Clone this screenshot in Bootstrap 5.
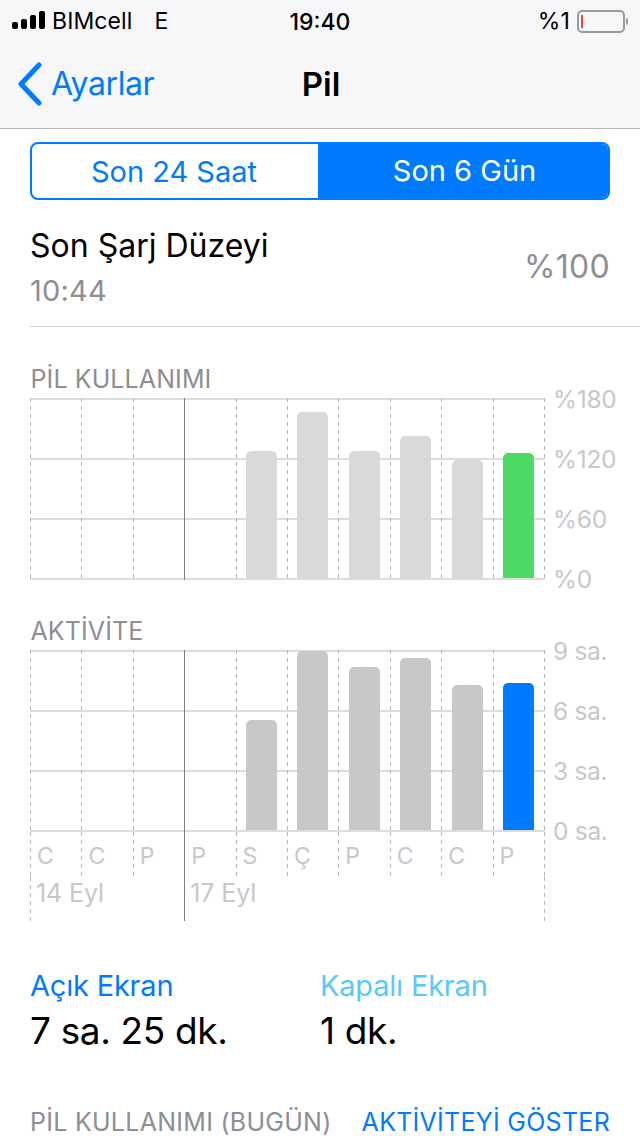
<!DOCTYPE html>
<html lang="tr">
<head>
  <meta charset="UTF-8">
  <title>Pil</title>
  <link href="https://cdn.jsdelivr.net/npm/bootstrap@5.3.0/dist/css/bootstrap.min.css" rel="stylesheet">
  <style>
    html, body { height: 1136px; overflow: hidden; }
    body { font-family: Inter, "Noto Sans", sans-serif; background: #fff; color: #000; }
    .top-bar { background: #f7f7f9; border-bottom: 1px solid #b4b4b6; height: 129px; }
    .status-row { height: 40px; padding: 2px 12px 0 12px; font-size: 23px; letter-spacing: .1px; }
    .signal { gap: 3px; margin-right: 7px; margin-bottom: 3px; }
    .signal i { display: block; width: 6px; background: #000; border-radius: 2px; }
    .status-net { margin-left: 22px; }
    .clock { left: 0; right: 0; top: 5px; font-size: 23px; font-weight: 500; }
    .battery { width: 48px; height: 23px; border: 2px solid #9a9a9c; border-radius: 5px; padding: 3px 2px; margin-left: 7px; margin-right: 5px; }
    .battery i { display: block; width: 2px; height: 100%; background: #ff3b30; }
    .battery-tip { width: 2px; height: 7px; background: #9a9a9c; border-radius: 0 2px 2px 0; margin-left: -4px; }
    .nav-row { height: 88px; padding-left: 17px; }
    .back-link { color: #007aff; font-size: 32px; letter-spacing: -.4px; gap: 8px; text-decoration: none; }
    .screen-title { left: 2px; right: 0; top: 61px; font-size: 33px; font-weight: 600; line-height: 46px; }
    .seg-wrap { padding: 13px 30px 0; }
    .seg { border: 2px solid #007aff; border-radius: 8px; height: 58px; overflow: hidden; font-size: 29px; padding-top: 1px; }
    .seg-off { color: #007aff; flex: 0 0 286px; padding-right: 2px; }
    .seg-on { background: #007aff; color: #fff; flex: 1 1 0; margin-top: -1px; padding-left: 3px; }
    .charge-row { margin-left: 30px; padding: 24px 30px 0 0; height: 127px; border-bottom: 1px solid #d2d2d4; }
    .charge-name { font-size: 32px; line-height: 44px; }
    .charge-time { font-size: 29px; line-height: 44px; color: #8e8e93; margin-top: 1px; letter-spacing: .2px; }
    .charge-val { font-size: 32px; color: #8e8e93; margin-top: 19px; letter-spacing: .3px; }
    .chart-head { margin: 33px 0 0 30.5px; height: 38px; font-size: 25px; line-height: 38px; color: #8e8e93; letter-spacing: .1px; }
    .chart-head.second { margin-top: 32px; }
    .chart-body { margin-left: 30px; }
    .plot { width: 515px; height: 182px; display: grid; grid-template-columns: repeat(10, 51.4px); position: relative;
      background:
        linear-gradient(#dcdcdc, #dcdcdc) 0 0 / 100% 2px no-repeat,
        linear-gradient(#dcdcdc, #dcdcdc) 0 60px / 100% 2px no-repeat,
        linear-gradient(#dcdcdc, #dcdcdc) 0 120px / 100% 2px no-repeat,
        linear-gradient(#dcdcdc, #dcdcdc) 0 180px / 100% 2px no-repeat; }
    .slot { display: flex; align-items: flex-end; padding-left: 10.5px; }
    .dash { background: repeating-linear-gradient(to bottom, #b9b9bb 0 4px, transparent 4px 8px) 0 0 / 1px 100% no-repeat; }
    .slot-solid { background: linear-gradient(#7d7d7f, #7d7d7f) 0 0 / 1px 100% no-repeat; }
    .bar { display: block; width: 31px; border-radius: 5px 5px 0 0; position: relative; }
    .edge { position: absolute; left: 514px; top: 0; bottom: 0; width: 1px; }
    .axis { width: 95px; height: 182px; padding-left: 8px; font-size: 24.5px; color: #c7c7cc; letter-spacing: -.3px; margin-top: -13px; line-height: 28px; }
    .axis span { display: block; height: 60px; }
    .days { width: 515px; display: grid; grid-template-columns: repeat(10, 51.4px); height: 45px; position: relative; }
    .days div { padding: 9px 0 0 7px; font-size: 23px; line-height: 30px; color: #c7c7cc; }
    .dates { width: 515px; display: grid; grid-template-columns: repeat(10, 51.4px); height: 44px; position: relative; }
    .dates div { font-size: 25px; line-height: 32px; padding: 0 0 0 6px; color: #c7c7cc; white-space: nowrap; letter-spacing: -.1px; }
    .usage-row { padding: 45px 30px 0; }
    .usage-col { width: 290px; }
    .usage-label { font-size: 29px; line-height: 40px; letter-spacing: -.2px; }
    .on-blue { color: #007aff; }
    .off-blue { color: #5ac8fa; }
    .usage-val { font-size: 37px; line-height: 50px; letter-spacing: -.35px; }
    .foot-row { padding: 47px 30px 0; font-size: 25px; line-height: 38px; letter-spacing: .27px; white-space: nowrap; }
    .foot-row a { color: #007aff; text-decoration: none; }
    .foot-row span { color: #8e8e93; }
  </style>
</head>
<body>

<div class="top-bar position-relative">
  <div class="status-row d-flex align-items-center">
    <div class="signal d-flex align-items-end">
      <i style="height: 7px"></i><i style="height: 10px"></i><i style="height: 14px"></i><i style="height: 18px"></i>
    </div>
    <span>BIMcell</span>
    <span class="status-net">E</span>
    <span class="ms-auto">%1</span>
    <div class="battery"><i></i></div>
    <div class="battery-tip"></div>
  </div>
  <div class="clock position-absolute text-center">19:40</div>
  <div class="nav-row d-flex align-items-center">
    <a class="back-link d-flex align-items-center" href="#">
      <svg width="26" height="44" viewBox="0 0 26 44"><path d="M22 3 4 22l18 19" fill="none" stroke="#007aff" stroke-width="5" stroke-linecap="round" stroke-linejoin="round"/></svg>
      Ayarlar
    </a>
  </div>
  <div class="screen-title position-absolute text-center">Pil</div>
</div>

<div class="seg-wrap">
  <div class="seg d-flex text-center">
    <div class="seg-off d-flex align-items-center justify-content-center">Son 24 Saat</div>
    <div class="seg-on d-flex align-items-center justify-content-center">Son 6 Gün</div>
  </div>
</div>

<div class="charge-row d-flex justify-content-between">
  <div>
    <div class="charge-name">Son Şarj Düzeyi</div>
    <div class="charge-time">10:44</div>
  </div>
  <div class="charge-val">%100</div>
</div>

<div class="chart-head">PİL KULLANIMI</div>
<div class="chart-body d-flex">
  <div class="plot" id="plot-usage"></div>
  <div class="axis"><span>%180</span><span>%120</span><span>%60</span><span>%0</span></div>
</div>

<div class="chart-head second">AKTİVİTE</div>
<div class="chart-body d-flex">
  <div class="plot" id="plot-activity"></div>
  <div class="axis"><span>9 sa.</span><span>6 sa.</span><span>3 sa.</span><span>0 sa.</span></div>
</div>
<div class="chart-body">
  <div class="days" id="days"></div>
  <div class="dates" id="dates"></div>
</div>

<div class="usage-row d-flex">
  <div class="usage-col">
    <div class="usage-label on-blue">Açık Ekran</div>
    <div class="usage-val">7 sa. 25 dk.</div>
  </div>
  <div class="usage-col">
    <div class="usage-label off-blue">Kapalı Ekran</div>
    <div class="usage-val">1 dk.</div>
  </div>
</div>

<div class="foot-row d-flex justify-content-between">
  <span>PİL KULLANIMI (BUGÜN)</span>
  <a href="#">AKTİVİTEYİ GÖSTER</a>
</div>

<script>
  // bar heights in px, first four slots are empty
  const usage = [0, 0, 0, 0, 127, 166, 127, 142, 118, 125];
  const activity = [0, 0, 0, 0, 110, 179, 163, 172, 145, 147];
  const dayNames = ['C', 'C', 'P', 'P', 'S', 'Ç', 'P', 'C', 'C', 'P'];

  function renderPlot(id, values, color, lastColor) {
    let html = '';
    values.forEach((h, i) => {
      const fill = i === values.length - 1 ? lastColor : color;
      html += `<div class="slot ${i === 3 ? 'slot-solid' : 'dash'}">` +
        (h ? `<span class="bar" style="height: ${h}px; background: ${fill}; top: -2px"></span>` : '') + '</div>';
    });
    html += '<div class="edge dash"></div>';
    document.getElementById(id).innerHTML = html;
  }

  renderPlot('plot-usage', usage, '#d9d9d9', '#4cd964');
  renderPlot('plot-activity', activity, '#c8c8c8', '#007aff');

  document.getElementById('days').innerHTML = dayNames.map((d, i) =>
    `<div class="${i === 3 ? 'slot-solid' : 'dash'}">${d}</div>`).join('') + '<div class="edge dash"></div>';

  document.getElementById('dates').innerHTML =
    '<div class="dash">14 Eyl</div><div></div><div></div><div class="slot-solid">17 Eyl</div><div></div><div></div><div></div><div></div><div></div><div></div><div class="edge dash"></div>';
</script>

<script src="https://cdn.jsdelivr.net/npm/bootstrap@5.3.0/dist/js/bootstrap.bundle.min.js"></script>
</body>
</html>
